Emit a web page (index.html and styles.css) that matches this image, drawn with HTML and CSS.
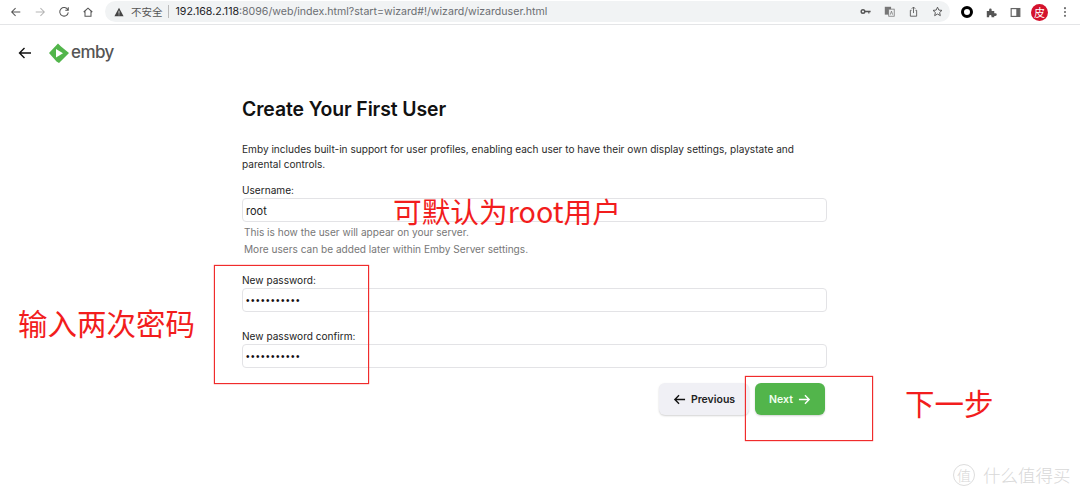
FILE: index.html
```html
<!DOCTYPE html>
<html lang="zh">
<head>
<meta charset="utf-8">
<title>Emby</title>
<link rel="stylesheet" href="styles.css">
</head>
<body>
<div class="toolbar">
  <div class="nav">
    <svg class="ic" viewBox="0 0 14 14"><path d="M12 7H2M6.500 2.500 2 7l4.500 4.500" class="st"/></svg>
    <svg class="ic dim" viewBox="0 0 14 14"><path d="M2 7h10M7.500 2.500 12 7l-4.500 4.500" class="st"/></svg>
    <svg class="ic" viewBox="0 0 14 14"><path d="M11.500 4.500A5 5 0 1 0 12 7.500M12 1.500v3.500H8.500" class="st"/></svg>
    <svg class="ic" viewBox="0 0 14 14"><path d="M2 7 7 2.500 12 7M3.500 6v6h7V6" class="st"/></svg>
  </div>
  <div class="omnibox">
    <svg class="warn" viewBox="0 0 12 12"><path d="M6 1 11.500 11H.5Z" fill="#444"/><path d="M6 4.500v3.500M6 9v1" stroke="#f1f3f4" stroke-width="1"/></svg>
    <span class="insecure">不安全</span>
    <span class="sep"></span>
    <span class="url"><b>192.168.2.118</b>:8096/web/index.html?start=wizard#!/wizard/wizarduser.html</span>
    <span class="omni-icons">
      <svg class="oi" viewBox="0 0 14 14"><circle cx="3.800" cy="7" r="2.300" fill="none" stroke="#555" stroke-width="1.800"/><path d="M6 6h7.500v2h-1.500v1.500h-1.500V8H6z" fill="#555"/></svg>
      <svg class="oi" viewBox="0 0 14 14"><rect x="1" y="1" width="8" height="10" fill="#777"/><rect x="6" y="4" width="7" height="9" fill="#f1f3f4" stroke="#777"/><path d="M8 11l1.500-4.500L11 11" fill="none" stroke="#777"/></svg>
      <svg class="oi" viewBox="0 0 14 14"><path d="M4.500 5.500H3v7.500h8V5.500H9.500M7 9V1.500M4.800 3.500 7 1.300l2.200 2.200" fill="none" stroke="#555" stroke-width="1.100"/></svg>
      <svg class="oi" viewBox="0 0 14 14"><path d="M7 1.500 8.700 5.200l4 .4-3 2.700.9 4L7 10.200l-3.600 2.100.9-4-3-2.700 4-.4Z" fill="none" stroke="#555" stroke-width="1.200"/></svg>
    </span>
  </div>
  <div class="exts">
    <span class="ring"></span>
    <svg class="oi" viewBox="0 0 14 14"><path d="M1 5h3V3.500a1.600 1.600 0 0 1 3.200 0V5h3.300v3H12a1.700 1.700 0 0 1 0 3.400h-1.500V13H7v-1.300a1.500 1.500 0 0 0-3 0V13H1z" fill="#555"/></svg>
    <svg class="oi" viewBox="0 0 14 14"><rect x="1.500" y="2" width="11" height="10" fill="none" stroke="#666" stroke-width="1.500"/><rect x="8" y="2" width="4.500" height="10" fill="#666"/></svg>
    <span class="avatar">皮</span>
    <svg class="dots" viewBox="0 0 4 14"><circle cx="2" cy="2.500" r="1.200"/><circle cx="2" cy="7" r="1.200"/><circle cx="2" cy="11.500" r="1.200"/></svg>
  </div>
</div>

<header class="appbar">
  <svg class="back" viewBox="0 0 14 14"><path d="M13 7H1.500M6.500 2 1.500 7l5 5" fill="none" stroke="#111" stroke-width="1.400"/></svg>
  <div class="logo">
    <svg class="logo-mark" viewBox="0 0 20 20"><path d="M0 10 9 0.500 12 3.500 20 10 10 20 7.500 18.500Z" fill="#52b54b"/><path d="M7 6v8.500l7-4.250z" fill="#fff"/></svg>
    <span class="logo-text">emby</span>
  </div>
</header>

<main class="page">
  <h1 class="title">Create Your First User</h1>
  <p class="intro">Emby includes built-in support for user profiles, enabling each user to have their own display settings, playstate and parental controls.</p>
  <div class="field">
    <label class="label">Username:</label>
    <div class="input">root</div>
    <div class="hint first">This is how the user will appear on your server.</div>
    <div class="hint">More users can be added later within Emby Server settings.</div>
  </div>
  <div class="field pw1">
    <label class="label">New password:</label>
    <div class="input dotsval">•••••••••••</div>
  </div>
  <div class="field pw2">
    <label class="label">New password confirm:</label>
    <div class="input dotsval">•••••••••••</div>
  </div>
  <div class="actions">
    <button class="btn prev"><svg class="btn-ic" viewBox="0 0 14 14"><path d="M13 7H2M6.500 2.500 2 7l4.500 4.500" fill="none" stroke="#111" stroke-width="1.500"/></svg>Previous</button>
    <button class="btn next">Next<svg class="btn-ic" viewBox="0 0 14 14"><path d="M1 7h11M7.500 2.500 12 7l-4.500 4.500" fill="none" stroke="#fff" stroke-width="1.500"/></svg></button>
  </div>
</main>

<div class="box box-pw"></div>
<div class="box box-next"></div>
<div class="note note-root">可默认为root用户</div>
<div class="note note-pw">输入两次密码</div>
<div class="note note-next">下一步</div>
<div class="watermark"><span class="wm-circle">值</span><span>什么值得买</span></div>
</body>
</html>
```
FILE: styles.css
```css
* { box-sizing: border-box; }
html, body { margin: 0; padding: 0; }
body {
  width: 1080px;
  height: 497px;
  overflow: hidden;
  position: relative;
  background: #fff;
  color: #1b1b1b;
  font-family: Inter, "Noto Sans CJK SC", sans-serif;
}
.toolbar {
  height: 25px;
  border-bottom: 1px solid #e4e5e7;
  display: flex;
  align-items: center;
  background: #fff;
}
.nav { display: flex; align-items: center; gap: 12px; padding-left: 10px; width: 105px; flex: none; }
.ic { width: 12px; height: 12px; }
.st { fill: none; stroke: #555; stroke-width: 1.200; }
.dim .st { stroke: #b5b5b5; }
.omnibox {
  width: 845px;
  height: 21px;
  margin-top: -1px;
  border-radius: 11px;
  background: #f1f3f4;
  display: flex;
  align-items: center;
  padding-left: 9px;
  flex: none;
}
.warn { width: 10px; height: 10px; flex: none; }
.insecure { margin-left: 7px; color: #555; font-size: 10.500px; }
.sep { width: 1px; height: 13px; background: #bbb; margin: 0 7px 0 5px; }
.url { color: #6b6e72; font-size: 10.600px; white-space: nowrap; }
.url b { font-weight: 400; color: #202124; }
.omni-icons { margin-left: auto; display: flex; align-items: center; gap: 13px; padding-right: 7px; }
.oi { width: 11px; height: 11px; flex: none; }
.exts { display: flex; align-items: center; gap: 13px; padding-left: 11px; flex: none; }
.ring { width: 12px; height: 12px; border: 3.500px solid #000; border-radius: 50%; flex: none; }
.avatar {
  width: 17px; height: 17px; border-radius: 50%; flex: none;
  background: #d4122d; color: #fff; font-size: 11px;
  display: flex; align-items: center; justify-content: center;
  margin-left: -3px; margin-right: 2px;
}
.dots { width: 4px; height: 12px; fill: #666; flex: none; }

.appbar { height: 55px; display: flex; align-items: center; padding: 0 0 0 18px; }
.back { width: 14px; height: 14px; }
.logo { display: flex; align-items: center; margin-left: 17px; }
.logo-mark { width: 20px; height: 20px; }
.logo-text { font-size: 17px; font-weight: 500; color: #555; margin-left: 2px; letter-spacing: -.6px; line-height: 20px; position: relative; top: -1px; }

.page { width: 585px; margin-left: 242px; }
.title { margin: 16px 0 0; font-size: 19.400px; line-height: 26px; font-weight: 600; color: #111; letter-spacing: -.1px; }
.intro { margin: 20px 0 0; font-size: 10.100px; line-height: 15px; width: 560px; color: #2a2a2a; }
.label { display: block; font-size: 10.100px; line-height: 13px; color: #222; margin-top: 12px; }
.input {
  height: 24px;
  margin-top: 1px;
  border: 1px solid #e3e3e6;
  border-radius: 4px;
  background: #fff;
  padding: 1px 3px 0;
  display: flex;
  align-items: center;
  font-size: 11px;
  color: #222;
}
.dotsval { font-size: 10px; letter-spacing: 1.500px; color: #111; font-family: "Liberation Sans", sans-serif; }
.hint { font-size: 10.100px; line-height: 13px; color: #777; margin: 4px 0 0 2px; }
.hint.first { margin-top: 4px; }
.pw1 .label { margin-top: 18px; }
.pw2 .label { margin-top: 18px; }
.actions { display: flex; gap: 6px; margin: 15px 0 0 417px; }
.btn {
  height: 32px;
  border: 0;
  border-radius: 6px;
  display: flex;
  align-items: center;
  justify-content: center;
  gap: 5px;
  font-family: Inter, sans-serif;
  font-size: 10.500px;
  font-weight: 600;
  box-shadow: 0 1px 2px rgba(0,0,0,.18);
  padding: 0;
}
.prev { width: 90px; background: #f0f0f5; color: #222; }
.next { width: 70px; background: #52b54b; color: #f2fff0; }
.btn-ic { width: 13px; height: 13px; }

.box { position: absolute; border: 1px solid #f02c2c; box-shadow: 0 0 1px #f02c2c; }
.box-pw { left: 214px; top: 265px; width: 155px; height: 119px; }
.box-next { left: 745px; top: 376px; width: 128px; height: 65px; }
.note { position: absolute; color: #f21d1d; font-family: "Noto Sans CJK SC", sans-serif; font-weight: 400; white-space: nowrap; }
.note-root { left: 393px; top: 198px; font-size: 28.700px; line-height: 26px; }
.note-pw { left: 18px; top: 302px; font-size: 29.500px; line-height: 40px; }
.note-next { left: 905px; top: 382px; font-size: 29.500px; line-height: 40px; }
.watermark {
  position: absolute; left: 953px; top: 463px;
  display: flex; align-items: center; gap: 8px;
  font-family: "Noto Sans CJK SC", sans-serif; font-size: 17.500px; font-weight: 300;
  color: #d8d8d8; line-height: 24px;
}
.wm-circle {
  width: 22px; height: 22px; border: 1px solid #ddd; border-radius: 50%;
  display: flex; align-items: center; justify-content: center; font-size: 14px;
}
```
